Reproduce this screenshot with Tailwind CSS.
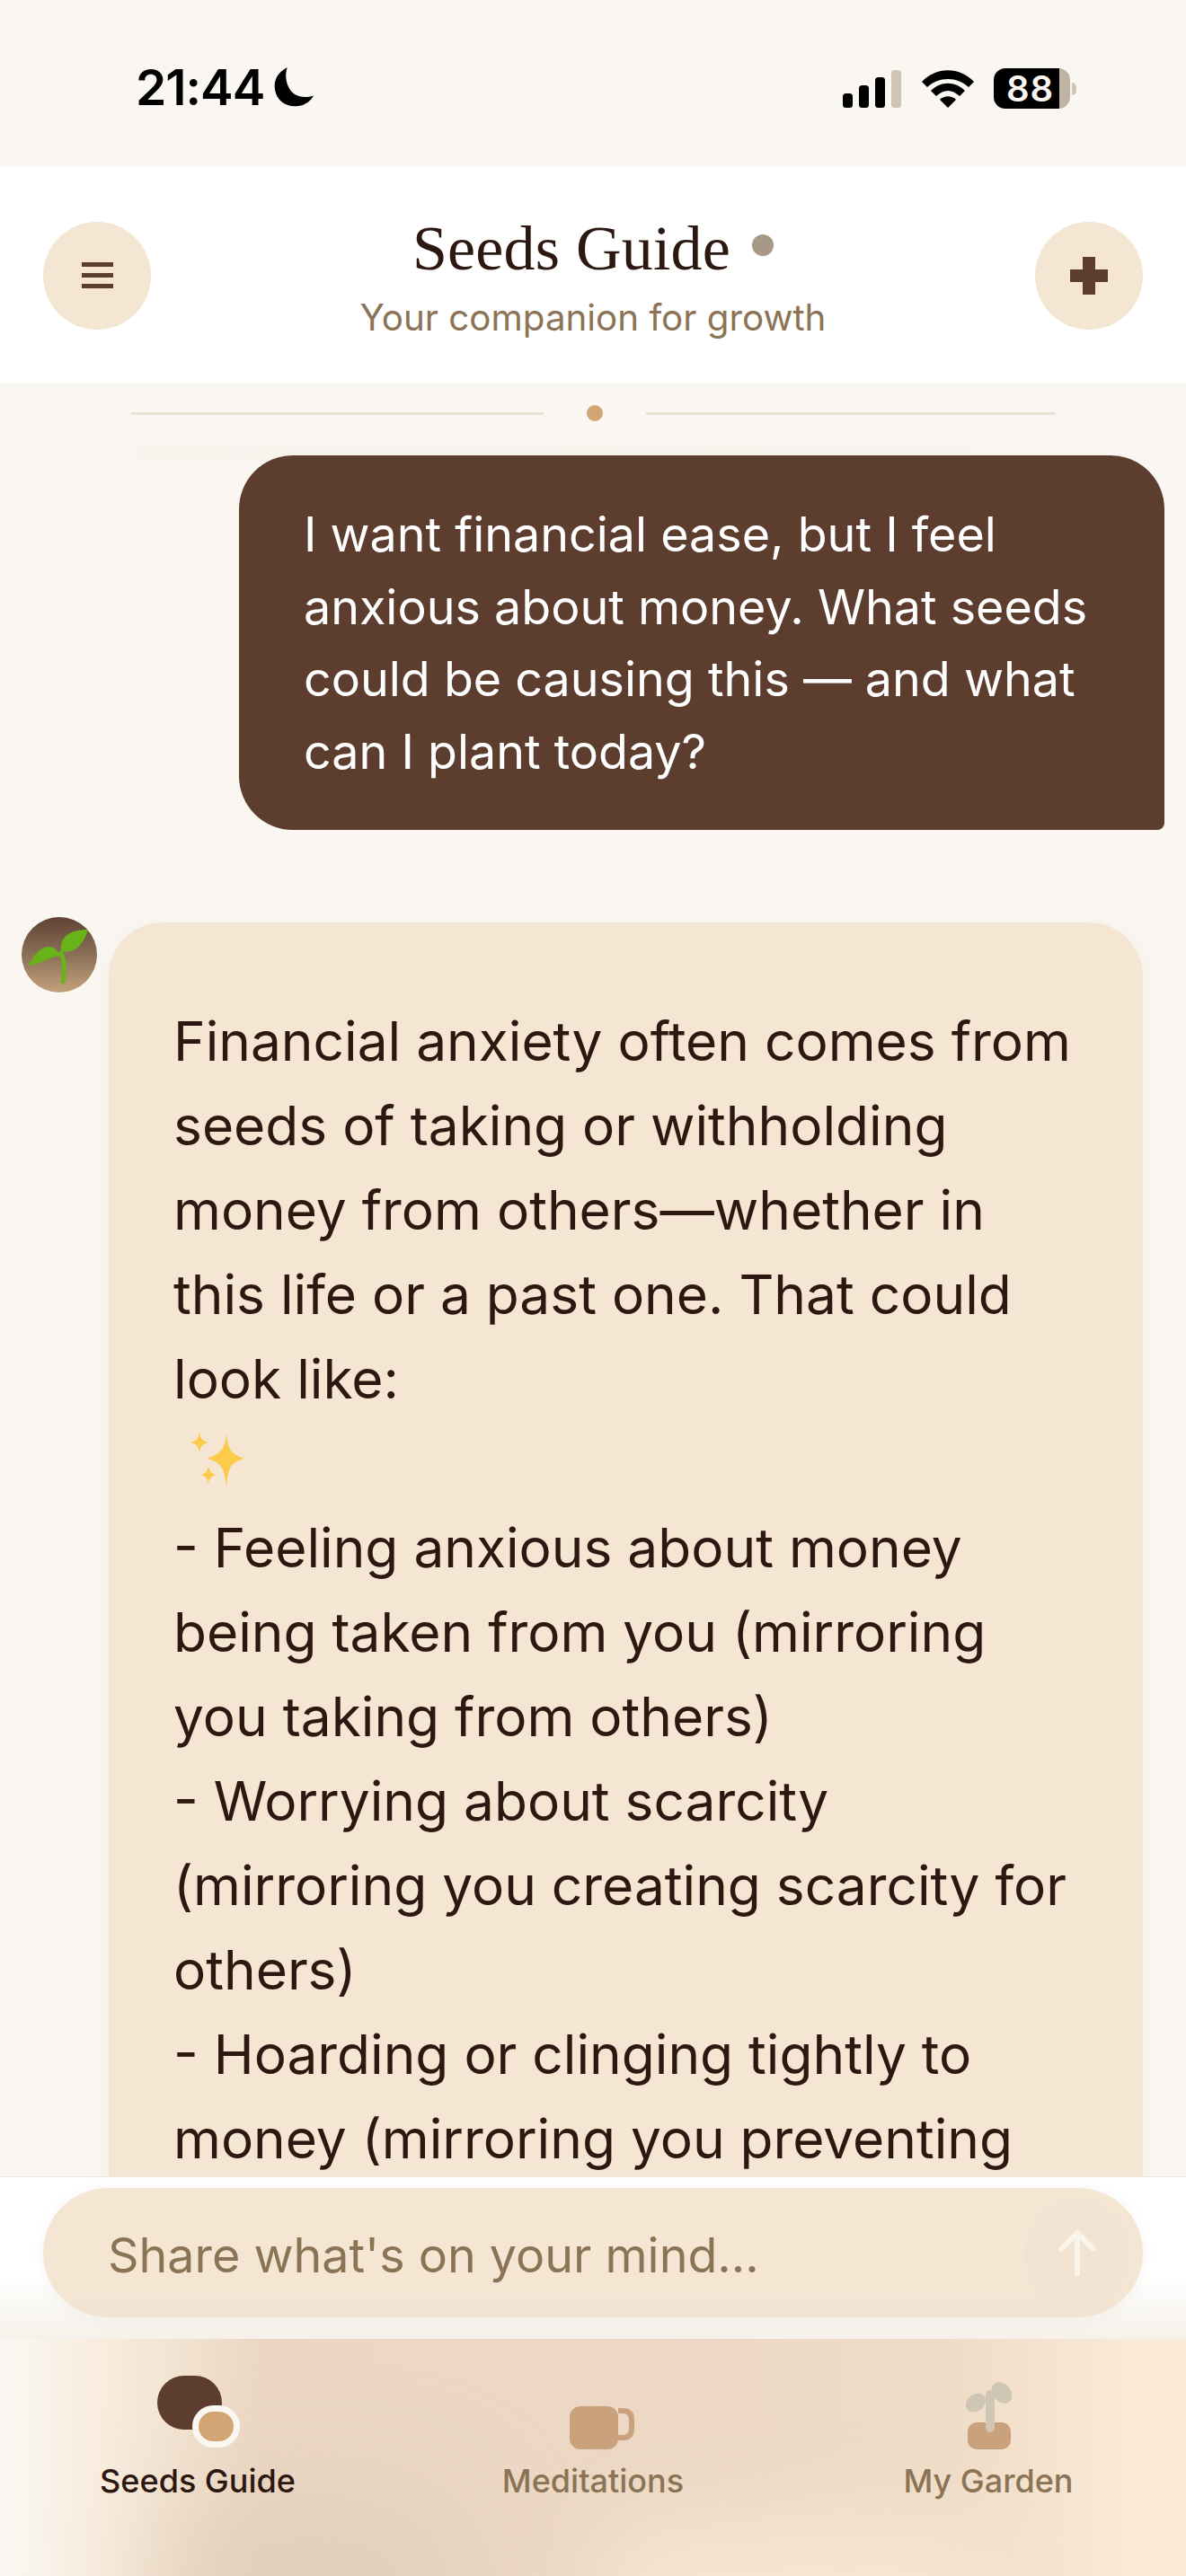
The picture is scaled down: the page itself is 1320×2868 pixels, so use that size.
<!DOCTYPE html>
<html lang="en">
<head>
  <meta charset="UTF-8" />
  <title>Seeds Guide</title>
  <script src="https://cdn.jsdelivr.net/npm/@tailwindcss/browser@4"></script>
</head>
<body class="bg-[#faf7f2] font-['Inter',sans-serif]">
  <div class="w-[1320px] h-[2868px] flex flex-col overflow-hidden relative">

    <!-- status bar -->
    <div class="h-[186px] shrink-0 flex items-start justify-between pl-[151px] pr-[122px] pt-[72px] text-black">
      <div class="flex items-center gap-[10px]">
        <span class="text-[55px] leading-[50px] font-semibold tracking-[-1px]">21:44</span>
        <svg width="46" height="46" viewBox="0 0 44 44"><path d="M15 1 C5 6 0 15 2 25 C4 37 15 44 27 42 C34 41 40 37 43 31 C31 35 20 31 16 21 C13 14 13 7 15 1 Z" fill="#000"/></svg>
      </div>
      <div class="flex items-center gap-[22px] pt-[4px]">
        <svg width="66" height="42" viewBox="0 0 66 42">
          <rect x="0" y="26" width="11" height="16" rx="3.5" fill="#000"/>
          <rect x="18" y="17" width="11" height="25" rx="3.5" fill="#000"/>
          <rect x="36" y="8" width="11" height="34" rx="3.5" fill="#000"/>
          <rect x="54" y="0" width="11" height="42" rx="3.5" fill="#cfc5b5"/>
        </svg>
        <svg width="58" height="42" viewBox="0 0 58 42">
          <path d="M0 13 C16 -4 42 -4 58 13 L52 19 C39 7 19 7 6 19 Z" fill="#000"/>
          <path d="M10 23 C21 12 37 12 48 23 L42 29 C33 21 25 21 16 29 Z" fill="#000"/>
          <path d="M20 33 C25 28 33 28 38 33 L29 42 Z" fill="#000"/>
        </svg>
        <div class="flex items-center">
          <div class="w-[85px] h-[45px] rounded-[13px] bg-[linear-gradient(to_right,#000_86%,#bfb3a3_86%)] flex items-center justify-start pl-[14px]">
            <span class="text-[40px] leading-none font-semibold text-[#faf7f2] tracking-[1px]">88</span>
          </div>
          <div class="w-[5px] h-[14px] ml-[2px] rounded-r-full bg-[#cfc5b5]"></div>
        </div>
      </div>
    </div>

    <!-- header -->
    <div class="h-[241px] shrink-0 bg-white flex items-center justify-between px-[48px]">
      <button class="w-[120px] h-[120px] rounded-full bg-[#f5e6d3] flex flex-col items-center justify-center gap-[7px]">
        <span class="block w-[35px] h-[5px] bg-[#5c3d2e]"></span>
        <span class="block w-[35px] h-[5px] bg-[#5c3d2e]"></span>
        <span class="block w-[35px] h-[5px] bg-[#5c3d2e]"></span>
      </button>
      <div class="flex flex-col items-center">
        <div class="flex items-center gap-[24px]">
          <h1 class="font-['Liberation_Serif',serif] text-[70px] leading-[84px] text-[#2c1810] tracking-[0.2px]">Seeds Guide</h1>
          <span class="w-[24px] h-[24px] rounded-full bg-[#a89888] -mt-[8px]"></span>
        </div>
        <p class="text-[40.3px] leading-[50px] mt-[10px] text-[#8b7355]">Your companion for growth</p>
      </div>
      <button class="w-[120px] h-[120px] rounded-full bg-[#f5e6d3] flex items-center justify-center">
        <svg width="42" height="42" viewBox="0 0 42 42"><path d="M14 0 H28 V14 H42 V28 H28 V42 H14 V28 H0 V14 H14 Z" fill="#5c3d2e"/></svg>
      </button>
    </div>

    <!-- chat -->
    <div class="flex-1 min-h-0 overflow-hidden relative border-b border-[#f0e6d8]">
      <div class="flex items-center justify-center gap-[48px] h-[66px] mb-[14px]">
        <span class="w-[459px] h-[3px] bg-[#ebe2d5]"></span>
        <span class="w-[18px] h-[18px] rounded-full bg-[#d4a574]"></span>
        <span class="w-[456px] h-[3px] bg-[#ebe2d5]"></span>
      </div>
      <div class="absolute left-[150px] top-[70px] w-[1090px] h-[14px] bg-[linear-gradient(to_right,#f5f0e9,#f8f4ee)] blur-[6px]"></div>

      <div class="flex justify-end pr-[24px]">
        <div class="relative w-[1030px] h-[417px] bg-[#5c3d2e] rounded-[60px] rounded-br-[8px] pl-[72px] pt-[48px] text-white text-[53.8px] leading-[80.5px]">
          I want financial ease, but I feel<br />anxious about money. What seeds<br />could be causing this — and what<br />can I plant today?
        </div>
      </div>

      <div class="flex items-start pt-[103px] pl-[24px] gap-[13px]">
        <!-- avatar -->
        <div class="w-[84px] h-[84px] mt-[-6px] rounded-full shrink-0 bg-[linear-gradient(to_bottom,#5f4232,#8a7058_50%,#c4a17c)] flex items-center justify-center overflow-hidden">
          <svg width="84" height="84" viewBox="0 0 84 84">
            <path d="M44 38 C42 22 54 14 74 14 C70 28 60 42 44 38 Z" fill="#6ab21a"/>
            <path d="M44 44 C36 28 20 28 8 54 C24 52 34 42 44 44 Z" fill="#6ab21a"/>
            <path d="M44 40 C49 50 48 62 46 72" stroke="#6ab21a" stroke-width="5" fill="none" stroke-linecap="round"/>
          </svg>
        </div>
        <div class="w-[1151px] h-[1500px] shrink-0 bg-[#f5e6d3] rounded-[60px] pl-[72px] pt-[85px] text-[#2c1810] text-[60.4px] leading-[94px] shadow-[0_4px_24px_rgba(92,61,46,0.05)]">
          Financial anxiety often comes from<br />
          seeds of taking or withholding<br />
          money from others—whether in<br />
          this life or a past one. That could<br />
          look like:<br />
          <svg class="block h-[94px] ml-[13px]" width="70" height="94" viewBox="0 0 70 94">
            <path d="M46 14 C48 32 50 36 66 42 C50 46 48 52 46 74 C44 52 40 46 24 42 C40 36 44 32 46 14 Z" fill="#fdcb4a"/>
            <path d="M16 12 C17 20 19 22 26 24 C19 26 17 28 16 36 C15 28 13 26 6 24 C13 22 15 20 16 12 Z" fill="#fdcb4a"/>
            <path d="M26 50 C27 56 29 58 34 60 C29 62 27 64 26 70 C25 64 23 62 18 60 C23 58 25 56 26 50 Z" fill="#fdcb4a"/>
          </svg>
          - Feeling anxious about money<br />
          being taken from you (mirroring<br />
          you taking from others)<br />
          - Worrying about scarcity<br />
          (mirroring you creating scarcity for<br />
          others)<br />
          - Hoarding or clinging tightly to<br />
          money (mirroring you preventing
        </div>
      </div>
    </div>

    <!-- input -->
    <div class="h-[180px] shrink-0 bg-[linear-gradient(to_bottom,#ffffff_60%,#f5f1ea)] px-[48px] pt-[12px]">
      <div class="h-[144px] rounded-full bg-[linear-gradient(to_bottom,#f5e6d3_70%,#f2e4d3)] flex items-center justify-between pl-[72px] pr-[14px] shadow-[0_2px_16px_rgba(92,61,46,0.05)]">
        <span class="text-[53.8px] pt-[6px] text-[#8b7355]">Share what's on your mind...</span>
        <button class="w-[118px] h-[120px] rounded-full bg-[#f2e3d2] flex items-center justify-center">
          <svg width="44" height="52" viewBox="0 0 44 52"><path d="M22 50 V4 M4 22 L22 4 L40 22" stroke="#fbf4ea" stroke-width="6" fill="none" stroke-linecap="round" stroke-linejoin="round"/></svg>
        </button>
      </div>
    </div>

    <!-- tab bar -->
    <div class="h-[264px] shrink-0 relative bg-[linear-gradient(to_right,#faf7f2_0%,#f8ecdd_9%,#ebd7c2_22%,#ecd8c4_60%,#efdcc7_80%,#fbebd8_97%)] overflow-hidden">
      <div class="absolute left-[180px] bottom-[-110px] w-[340px] h-[200px] rounded-full bg-[#e2cfba] blur-[60px]"></div>
      <div class="absolute right-[200px] bottom-[-90px] w-[460px] h-[150px] rounded-full bg-[#f6e6d2] blur-[50px]"></div>
      <div class="relative grid grid-cols-3 pt-[41px]">
        <div class="flex flex-col items-center">
          <div class="w-[120px] h-[82px] relative">
            <span class="absolute left-[15px] top-0 w-[72px] h-[60px] rounded-[30px] bg-[#5c3d2e]"></span>
            <span class="absolute left-[54px] top-[33px] w-[53px] h-[47px] rounded-full bg-[#d4a574] border-[7px] border-[#faf7f2]"></span>
          </div>
          <span class="mt-[13px] text-[36px] leading-[44px] font-medium text-[#2c1810]">Seeds Guide</span>
        </div>
        <div class="flex flex-col items-center">
          <svg width="120" height="82" viewBox="0 0 120 82">
            <rect x="34" y="34" width="54" height="48" rx="12" fill="#c9a17c" />
            <path d="M88 39 H93 Q103 39 103 49 V59 Q103 69 93 69 H88" stroke="#c9a17c" stroke-width="6" fill="none"/>
          </svg>
          <span class="mt-[13px] text-[36px] leading-[44px] font-medium text-[#8b7355]">Meditations</span>
        </div>
        <div class="flex flex-col items-center">
          <svg width="120" height="82" viewBox="0 0 120 82">
            <rect x="37" y="52" width="48" height="30" rx="10" fill="#c9a17c" />
            <ellipse cx="46" cy="30" rx="12" ry="9.5" transform="rotate(-40 46 30)" fill="#d0c6b5"/>
            <ellipse cx="75" cy="19" rx="13" ry="10" transform="rotate(50 75 19)" fill="#d0c6b5"/>
            <path d="M62 58 V21" stroke="#d0c6b5" stroke-width="10" stroke-linecap="round"/>
          </svg>
          <span class="mt-[13px] text-[36px] leading-[44px] font-medium text-[#8b7355]">My Garden</span>
        </div>
      </div>
    </div>
  </div>
</body>
</html>
